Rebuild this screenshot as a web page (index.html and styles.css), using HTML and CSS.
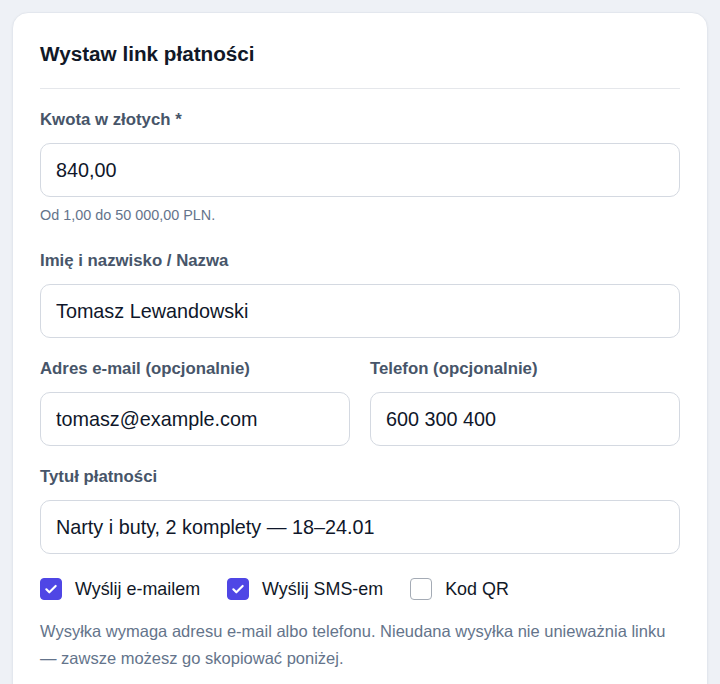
FILE: index.html
```html
<!DOCTYPE html>
<html lang="pl">
<head>
  <meta charset="UTF-8" />
  <meta name="viewport" content="width=device-width, initial-scale=1.0"/>
  <title>Wystaw link płatności</title>
  <link rel="stylesheet" href="styles.css">
</head>
<body>

  <div class="card">
    <h2 class="card-title">Wystaw link płatności</h2>

    <div class="field">
      <label class="label" for="kwota">Kwota w złotych *</label>
      <input class="input" id="kwota" type="text" value="840,00" />
      <div class="hint">Od 1,00 do 50 000,00 PLN.</div>
    </div>

    <div class="field">
      <label class="label" for="nazwa">Imię i nazwisko / Nazwa</label>
      <input class="input" id="nazwa" type="text" value="Tomasz Lewandowski" />
    </div>

    <div class="row">
      <div class="field">
        <label class="label" for="email">Adres e-mail (opcjonalnie)</label>
        <input class="input" id="email" type="text" value="tomasz@example.com" />
      </div>
      <div class="field">
        <label class="label" for="tel">Telefon (opcjonalnie)</label>
        <input class="input" id="tel" type="text" value="600 300 400" />
      </div>
    </div>

    <div class="field">
      <label class="label" for="tytul">Tytuł płatności</label>
      <input class="input" id="tytul" type="text" value="Narty i buty, 2 komplety — 18–24.01" />
    </div>

    <div class="checks">
      <label class="check">
        <span class="box checked">
          <svg viewBox="0 0 24 24" width="16" height="16"><path d="M5 12.5l4.5 4.5L19 7.5" fill="none" stroke="#fff" stroke-width="3.2" stroke-linecap="round" stroke-linejoin="round"/></svg>
        </span>
        Wyślij e-mailem
      </label>
      <label class="check">
        <span class="box checked">
          <svg viewBox="0 0 24 24" width="16" height="16"><path d="M5 12.5l4.5 4.5L19 7.5" fill="none" stroke="#fff" stroke-width="3.2" stroke-linecap="round" stroke-linejoin="round"/></svg>
        </span>
        Wyślij SMS-em
      </label>
      <label class="check">
        <span class="box"></span>
        Kod QR
      </label>
    </div>

    <p class="note">Wysyłka wymaga adresu e-mail albo telefonu. Nieudana wysyłka nie unieważnia linku — zawsze możesz go skopiować poniżej.</p>
  </div>

</body>
</html>
```

FILE: styles.css
```css
body {
  font-family: "Liberation Sans", Arial, sans-serif;
  background: #eef1f6;
  margin: 0;
  padding: 12px 12px 0;
  color: #0f172a;
}
.card {
  background: white;
  border: 1px solid #e3e7ee;
  border-radius: 16px;
  padding: 27px 27px 40px;
  box-shadow: 0 1px 3px rgba(15, 23, 42, 0.05);
}
.card-title {
  margin: 0;
  font-size: 20.7px;
  line-height: 28px;
  font-weight: bold;
  color: #111827;
  padding-bottom: 20px;
  border-bottom: 1px solid #e5e7eb;
  margin-bottom: 20px;
}
.field {
  display: flex;
  flex-direction: column;
  margin-bottom: 20px;
}
.label {
  font-size: 16.8px;
  line-height: 22px;
  font-weight: bold;
  color: #475569;
  margin-bottom: 12px;
}
.input {
  height: 54px;
  box-sizing: border-box;
  border: 1px solid #d4d9e1;
  border-radius: 10px;
  padding: 0 15px;
  font-family: inherit;
  font-size: 19.8px;
  color: #0f172a;
  background: white;
  outline: none;
}
.hint {
  font-size: 14.4px;
  line-height: 20px;
  color: #64748b;
  margin-top: 8px;
  margin-bottom: 5px;
}
.row {
  display: grid;
  grid-template-columns: 1fr 1fr;
  gap: 20px;
}
.checks {
  display: flex;
  gap: 27px;
  align-items: center;
  padding-top: 3px;
}
.check {
  display: flex;
  align-items: center;
  gap: 13px;
  font-size: 17.9px;
  line-height: 24px;
  color: #111827;
}
.box {
  width: 22px;
  height: 22px;
  box-sizing: border-box;
  border: 1px solid #a4abb5;
  border-radius: 4px;
  background: white;
  display: flex;
  align-items: center;
  justify-content: center;
}
.box.checked {
  background: #4f46e5;
  border-color: #4f46e5;
}
.note {
  margin: 17px 0 0;
  font-size: 16.5px;
  line-height: 27px;
  color: #64748b;
}
```
